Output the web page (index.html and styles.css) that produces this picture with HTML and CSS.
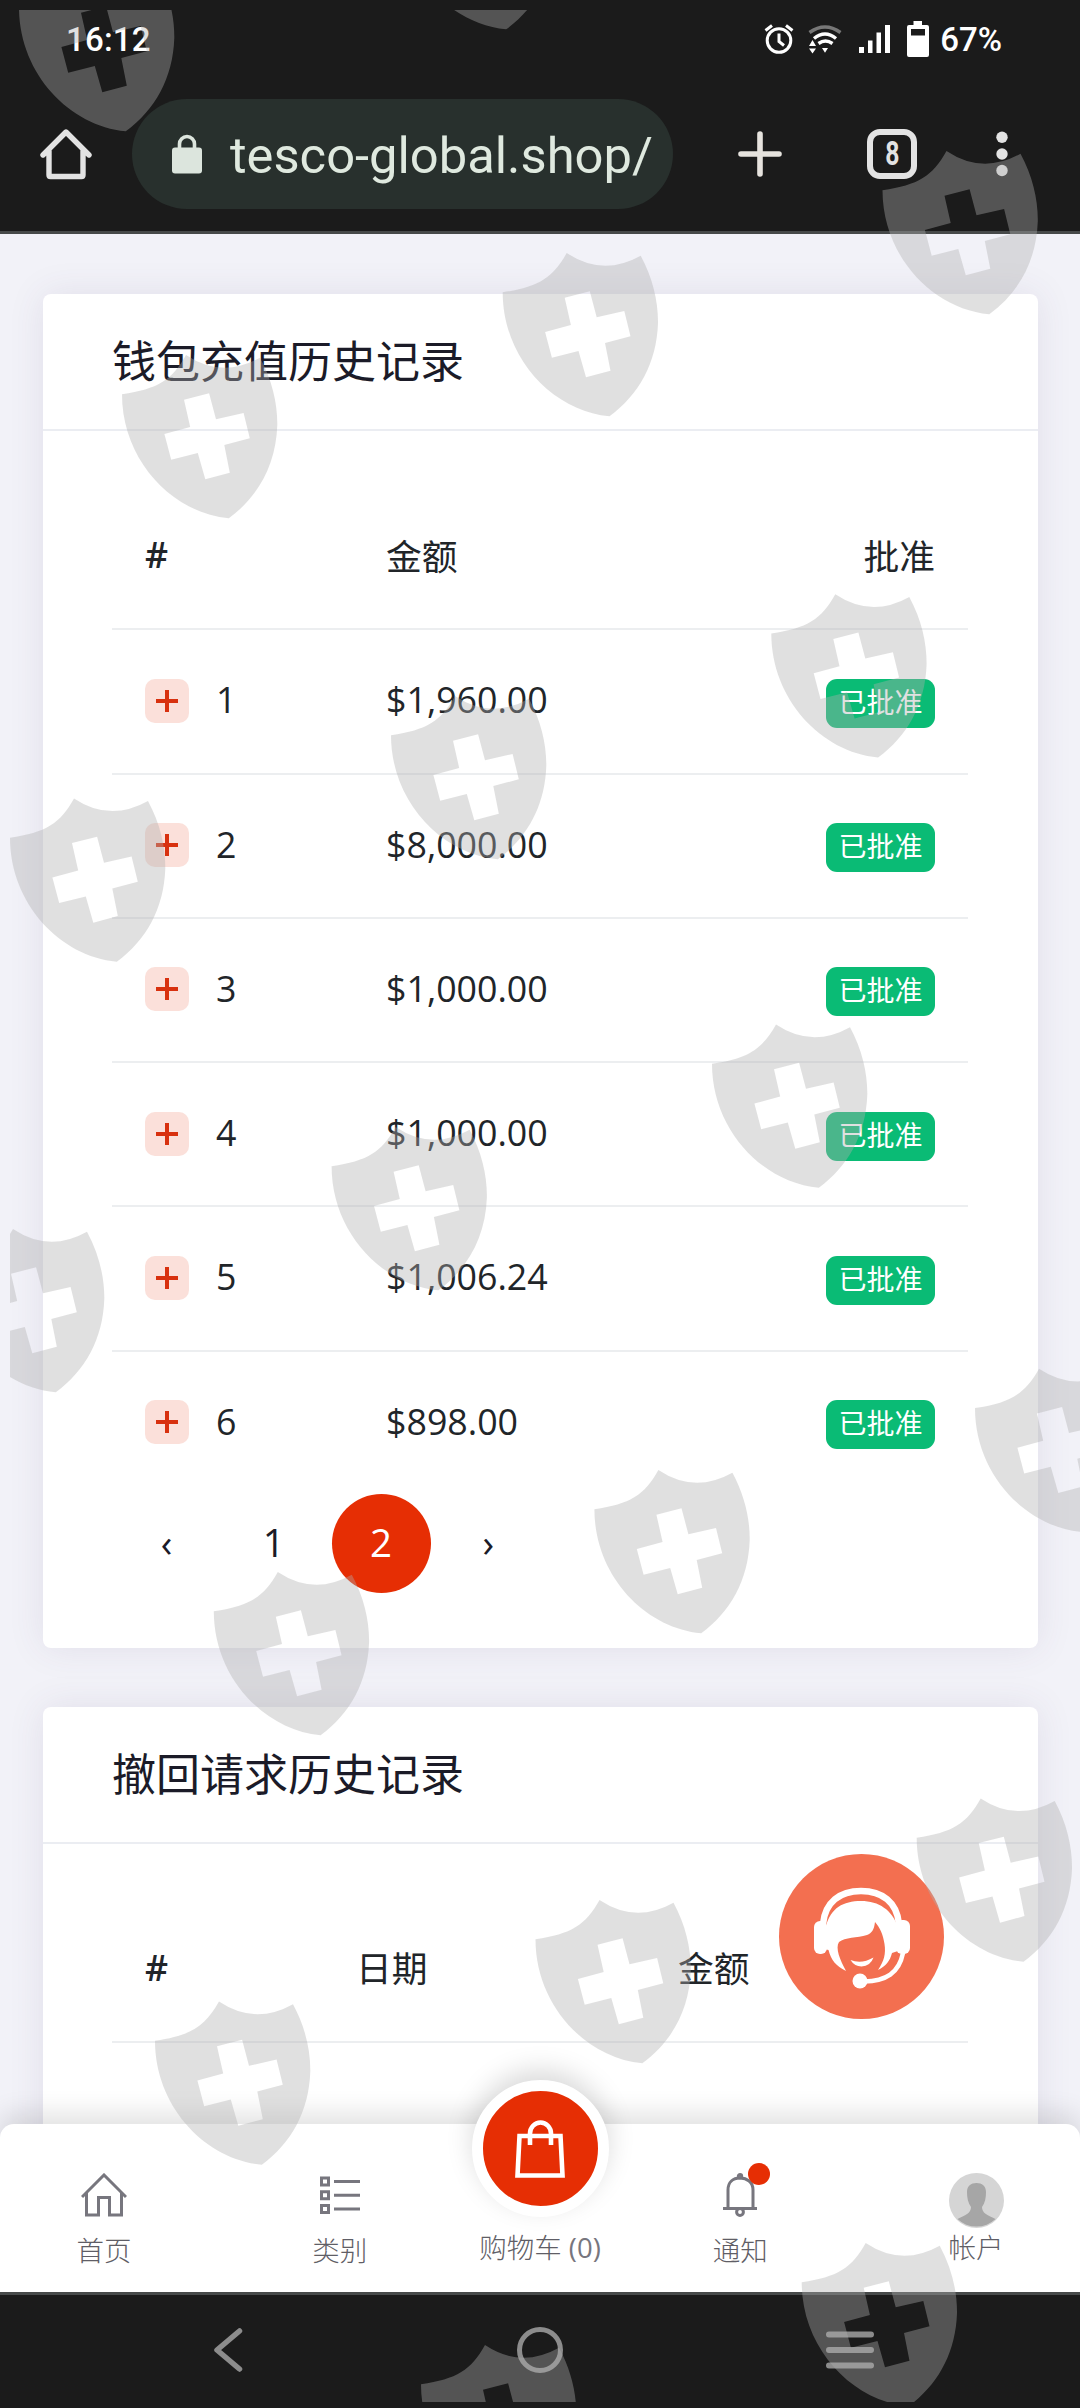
FILE: index.html
```html
<!DOCTYPE html>
<html lang="zh-CN">
<head>
    <meta charset="UTF-8" />
    <title>钱包</title>
    <link rel="stylesheet" href="styles.css">
</head>
<body>

<div class="screen">
    <!-- Status bar -->
    <div class="status-bar">
        <span class="clock">16:12</span>
        <div class="status-icons">
            <svg class="icon-alarm" width="30" height="30" viewBox="0 0 30 30" fill="none" stroke="#fff">
                <circle cx="15" cy="16.5" r="11.8" stroke-width="3"/>
                <path d="M15 9.5v8l5 4" stroke-width="3"/>
                <path d="M1.5 6.5L8 1.5M28.500 6.500L22 1.500" stroke-width="3"/>
            </svg>
            <svg class="icon-wifi" width="34" height="30" viewBox="0 0 34 30" fill="none" stroke="#fff" stroke-width="3.4">
                <path d="M1.500 8.500Q17 -2.500 32.500 8.500" stroke="#777"/>
                <path d="M6 14.500Q17 5.500 28 14.500"/>
                <path d="M10.500 19.500Q17.500 14.500 24.500 19.500"/>
                <path d="M14 24h6l-3 4.800zM1 22h7l-3.500-6zM1 24.500h7l-3.500 5z" fill="#fff" stroke="none"/>
            </svg>
            <svg class="icon-signal" width="31" height="28" viewBox="0 0 31 28" fill="#fff">
                <path d="M0 22h5v6H0zM9 15.500h4.500V28H9zM17.500 7.500H22V28h-4.500zM26 0h5v28h-5z"/>
            </svg>
            <svg class="icon-battery" width="22" height="36" viewBox="0 0 22 36" fill="#fff">
                <path fill-rule="evenodd" d="M6.500 0h8.500v4h5q2 0 2 2v28q0 2-2 2H2q-2 0-2-2V6q0-2 2-2h4.500zM4 8v6.500h14V8z"/>
            </svg>
            <span class="percent">67%</span>
        </div>
    </div>

    <!-- Browser bar -->
    <div class="browser-bar">
        <svg class="icon-home" width="52" height="52" viewBox="0 0 52 52" fill="none" stroke="#e3e3e3" stroke-width="5.400" stroke-linecap="round" stroke-linejoin="round">
            <path d="M3 27L26 4l23 23M9 23v24q0 1.500 1.500 1.500h31q1.500 0 1.500-1.500V23"/>
        </svg>
        <div class="url">
            <svg width="30" height="40" viewBox="0 0 30 40">
                <path d="M7.500 15V10a7.500 7.500 0 0 1 15 0v5" fill="none" stroke="#dce5dd" stroke-width="3.600"/>
                <rect x="0" y="13.500" width="30" height="26" rx="3" fill="#dce5dd"/>
            </svg>
            <span>tesco-global.shop/</span>
        </div>
        <svg class="icon-plus" width="44" height="46" viewBox="0 0 44 46" stroke="#e6e3de" stroke-width="5.600" stroke-linecap="round">
            <path d="M22 3v40M3 23h38"/>
        </svg>
        <div class="tab-count"><span>8</span></div>
        <svg class="icon-dots" width="12" height="46" viewBox="0 0 12 46" fill="#e3e3e3">
            <circle cx="6" cy="6.300" r="5.700"/><circle cx="6" cy="23" r="5.700"/><circle cx="6" cy="39.500" r="5.700"/>
        </svg>
    </div>

    <!-- Page -->
    <div class="page">
        <div class="card">
            <h5 class="card-header">钱包充值历史记录</h5>
            <div class="card-body">
                <div class="row row-head">
                    <b class="col-id">#</b><span class="col-amount">金额</span><span>批准</span>
                </div>
                <div class="row">
                    <span class="col-id"><i class="toggle"></i>1</span><span class="col-amount">$1,960.00</span><span class="badge">已批准</span>
                </div>
                <div class="row">
                    <span class="col-id"><i class="toggle"></i>2</span><span class="col-amount">$8,000.00</span><span class="badge">已批准</span>
                </div>
                <div class="row">
                    <span class="col-id"><i class="toggle"></i>3</span><span class="col-amount">$1,000.00</span><span class="badge">已批准</span>
                </div>
                <div class="row">
                    <span class="col-id"><i class="toggle"></i>4</span><span class="col-amount">$1,000.00</span><span class="badge">已批准</span>
                </div>
                <div class="row">
                    <span class="col-id"><i class="toggle"></i>5</span><span class="col-amount">$1,006.24</span><span class="badge">已批准</span>
                </div>
                <div class="row row-last">
                    <span class="col-id"><i class="toggle"></i>6</span><span class="col-amount">$898.00</span><span class="badge">已批准</span>
                </div>
                <div class="pagination">
                    <a>‹</a><a>1</a><a class="active">2</a><a>›</a>
                </div>
            </div>
        </div>

        <div class="card card-withdraw">
            <h5 class="card-header">撤回请求历史记录</h5>
            <div class="card-body">
                <div class="row row-head">
                    <b class="col-id2">#</b><span class="col-date">日期</span><span>金额</span>
                </div>
            </div>
        </div>

        <!-- Support button -->
        <div class="support">
            <svg width="100" height="106" viewBox="0 0 100 106" fill="none" stroke="#fff" stroke-linecap="round">
                <path d="M11 40C13 18 28 7 49 7s36 11 38 33" stroke-width="6.500"/>
                <path d="M14 42C19 24 31 17 49 17s31 9 37 26v24l-6 2C78 77 74 82 66 86 72 77 74 70 72.500 60 71 50 68 44 63 38 62 46 60 49 55 51 45 54 33 53 27 58 23 64 28 76 34 87 24 82 19 76 16.500 66l-4-1z" fill="#fff" stroke="none"/>
                <rect x="2" y="37" width="13" height="33" rx="6" fill="#fff" stroke="none"/>
                <rect x="84" y="36" width="14" height="34" rx="6" fill="#fff" stroke="none"/>
                <path d="M38.500 76q11 4.500 23-2.500-3 8.500-12 9-7 0-11-6.500z" fill="#fff" stroke="none"/>
                <path d="M91 69C87 89 74 97 52 97.500" stroke-width="4.500"/>
                <circle cx="48" cy="97" r="7.500" fill="#fff" stroke="none"/>
            </svg>
        </div>

        <!-- Bottom navigation -->
        <div class="bottom-nav">
            <a class="nav-item nav-side">
                <svg width="46" height="44" viewBox="0 0 46 44" fill="none" stroke="#77767e" stroke-width="3">
                    <path d="M1 24L23 2l22 22M5.500 20v22h12V24.500h11V42h12V20"/>
                </svg>
                <span>首页</span>
            </a>
            <a class="nav-item nav-inner">
                <svg width="40" height="44" viewBox="0 0 40 44" fill="none" stroke="#77767e" stroke-width="3">
                    <path d="M1.500 5h7v7h-7zM1.500 18.700h7v7h-7zM1.500 32.500h7v7h-7zM14 8.500h26M14 22.200h26M14 36h26"/>
                </svg>
                <span>类别</span>
            </a>
            <a class="nav-item nav-cart">
                <div class="cart">
                    <svg width="50" height="58" viewBox="0 0 50 58" fill="none" stroke="#fff" stroke-width="4.600">
                        <path d="M4.500 16h41l2 39.500h-45zM15 25V13.500a10.500 11 0 0 1 21 0V25"/>
                    </svg>
                </div>
                <span>购物车 <em>(0)</em></span>
            </a>
            <a class="nav-item nav-inner">
                <div class="bell">
                    <svg width="36" height="44" viewBox="0 0 36 44" fill="none" stroke="#77767e" stroke-width="3">
                        <path d="M1 35.500h34M6 35.500V17C6 9 11 5 18 5s13 4 13 12v18.500"/>
                        <circle cx="18" cy="39" r="3.400"/>
                        <circle cx="18" cy="3.200" r="1.700"/>
                    </svg>
                    <i class="dot"></i>
                </div>
                <span>通知</span>
            </a>
            <a class="nav-item nav-side nav-user">
                <svg width="55" height="55" viewBox="0 0 55 55">
                    <circle cx="27.500" cy="27.500" r="27.500" fill="#d5d5d5"/>
                    <path d="M18 19c0-6 4-9 9.500-9s9.500 3 9.500 9c0 6-1 11-4 15 0 6 5 8 13.500 12a27.500 27.500 0 0 1-38 0C17 42 22 40 22 34c-3-4-4-9-4-15z" fill="#a6a6a6"/>
                </svg>
                <span>帐户</span>
            </a>
        </div>
    </div>

    <!-- System bar -->
    <div class="system-bar">
        <svg width="30" height="44" viewBox="0 0 30 44" fill="none" stroke="#8c8c8c" stroke-width="5.500" stroke-linecap="round" stroke-linejoin="round">
            <path d="M26.500 3L4 22l22.500 19"/>
        </svg>
        <i class="sys-home"></i>
        <svg width="48" height="38" viewBox="0 0 48 38" stroke="#8c8c8c" stroke-width="6" stroke-linecap="round">
            <path d="M3 3.500h42M3 19h42M3 34.500h42"/>
        </svg>
    </div>

    <!-- Shield watermark -->
    <svg class="watermark" width="1080" height="2408" viewBox="0 0 1080 2408">
        <defs>
            <path id="shield" fill-rule="evenodd" d="M0 39.300C36 34 50 25 64 0Q100 24 138 2.700C150 25 155.500 48 155.300 70C154 110 136 142 106.800 163.300C50 158 0 105 0 39.300zM62 44.700L68.200 72 42.400 79 49.200 104.700 75.800 98 83.300 124.300 107.800 117.700 102.300 90 127.800 83.300 121.600 58 94 64.300 87.100 38.300z"/>
            <clipPath id="area"><rect x="10" y="10" width="1070" height="2392"/></clipPath>
        </defs>
        <g fill="#b0b0b0" fill-opacity="0.39" clip-path="url(#area)">
            <use href="#shield" x="19" y="-32"/>
            <use href="#shield" x="399.400" y="-134"/>
            <use href="#shield" x="882.500" y="151"/>
            <use href="#shield" x="502.700" y="253"/>
            <use href="#shield" x="122" y="355"/>
            <use href="#shield" x="771.300" y="594.300"/>
            <use href="#shield" x="391" y="696"/>
            <use href="#shield" x="10" y="798.400"/>
            <use href="#shield" x="712" y="1024.500"/>
            <use href="#shield" x="331.600" y="1127"/>
            <use href="#shield" x="-51" y="1229"/>
            <use href="#shield" x="975" y="1368.700"/>
            <use href="#shield" x="594.400" y="1470"/>
            <use href="#shield" x="213.800" y="1572"/>
            <use href="#shield" x="916.700" y="1798.400"/>
            <use href="#shield" x="535.500" y="1900"/>
            <use href="#shield" x="155" y="2001.500"/>
            <use href="#shield" x="801.700" y="2243"/>
            <use href="#shield" x="421" y="2345"/>
        </g>
    </svg>
</div>

</body>
</html>
```
FILE: styles.css
```css
* {
    box-sizing: border-box;
}

body {
    margin: 0;
    background: #1b1b1b;
    font-family: 'Open Sans', 'Noto Sans CJK SC', sans-serif;
    color: #212529;
}

.screen {
    position: relative;
    display: flex;
    flex-direction: column;
    width: 1080px;
    height: 2408px;
    overflow: hidden;
}

svg {
    display: block;
    flex: none;
}

/* Status bar */
.status-bar {
    display: flex;
    align-items: center;
    justify-content: space-between;
    height: 78px;
    padding: 0 78px 0 66px;
    font-family: Roboto, sans-serif;
    font-weight: 500;
    font-size: 33px;
    color: #fff;
}

.clock {
    letter-spacing: 0.2px;
}

.status-icons {
    display: flex;
    align-items: center;
}

.icon-wifi {
    margin-left: 14px;
}

.icon-signal {
    margin-left: 17px;
}

.icon-battery {
    margin-left: 17px;
}

.percent {
    margin-left: 11px;
}

/* Browser bar */
.browser-bar {
    display: flex;
    align-items: center;
    height: 156px;
    padding: 0 0 2px 40px;
    border-bottom: 3px solid #474a4a;
}

.url {
    display: flex;
    align-items: center;
    gap: 28px;
    width: 541px;
    height: 110px;
    margin-left: 40px;
    padding: 4px 0 0 40px;
    border-radius: 55px;
    background: #28302d;
    font-family: Roboto, sans-serif;
    font-size: 50.7px;
    color: #dfe9df;
    white-space: nowrap;
}

.url svg {
    margin-top: -4px;
}

.icon-plus {
    margin-left: 65px;
}

.tab-count {
    display: flex;
    align-items: center;
    justify-content: center;
    width: 50px;
    height: 50px;
    margin-left: 85px;
    border: 6px solid #e3e3e3;
    border-radius: 13px;
    font-family: Roboto, sans-serif;
    font-weight: 700;
    font-size: 33px;
    color: #e3e3e3;
}

.tab-count span {
    transform: scaleX(0.75);
}

.icon-dots {
    margin-left: 79px;
}

/* Page */
.page {
    position: relative;
    height: 2058px;
    padding: 60px 42px 0 43px;
    background: #f2f2f8;
    overflow: hidden;
}

.card {
    margin-bottom: 59px;
    border-radius: 8px;
    background: #fff;
    box-shadow: 0 0 36px rgba(82, 63, 105, 0.1);
}

.card-withdraw {
    height: 700px;
}

.card-header {
    display: flex;
    align-items: center;
    height: 137px;
    margin: 0;
    padding: 0 69px 5px;
    border-bottom: 2px solid #ebedf2;
    font-size: 44px;
    font-weight: 400;
    color: #1b1b28;
}

.card-body {
    padding: 55px 70px 55px 69px;
}

.row {
    display: flex;
    align-items: center;
    height: 144.27px;
    padding: 0 33px;
    border-bottom: 2px solid #eceef0;
    font-size: 35.75px;
}

.row-head {
    padding-bottom: 6px;
}

.row-head b {
    font-weight: 600;
}

.row-last {
    height: 142px;
    border-bottom: none;
}

.col-id {
    display: flex;
    align-items: center;
    width: 241px;
    margin-top: -4px;
}

.col-amount {
    flex: 1;
    margin-top: -4px;
}

.row-head .col-id,
.row-head .col-amount {
    margin-top: 0;
}

.col-id2 {
    width: 211px;
}

.col-date {
    width: 322px;
}

/* Expand button */
.toggle {
    width: 44px;
    height: 44px;
    margin: 3px 27px 0 0;
    border-radius: 10px;
    background:
        linear-gradient(#d8310f, #d8310f) center / 22px 4px no-repeat,
        linear-gradient(#d8310f, #d8310f) center / 4px 22px no-repeat,
        #fbe0da;
}

.badge {
    width: 109px;
    height: 49px;
    margin-top: 4px;
    border-radius: 11px;
    background: #0abb75;
    font-size: 28px;
    line-height: 47px;
    text-align: center;
    color: #fff;
}

.pagination {
    display: flex;
    gap: 8.25px;
    padding-left: 5px;
}

.pagination a {
    width: 99px;
    height: 99px;
    border-radius: 50%;
    font-size: 38.5px;
    line-height: 97px;
    text-align: center;
    color: #1b1b28;
}

.pagination .active {
    background: #e62e04;
    color: #fff;
}

/* Support button */
.support {
    position: absolute;
    left: 779px;
    top: 1620px;
    display: flex;
    align-items: center;
    justify-content: center;
    width: 165px;
    height: 165px;
    border-radius: 50%;
    background: #f36f50;
}

/* Bottom navigation */
.bottom-nav {
    position: absolute;
    left: 0;
    bottom: 0;
    display: flex;
    width: 1080px;
    height: 168px;
    border-radius: 14px 14px 0 0;
    background: #fff;
    box-shadow: 0 -10px 27px rgba(0, 0, 0, 0.12);
    font-size: 27.5px;
    font-weight: 300;
    color: #5f5e66;
}

.nav-item {
    display: flex;
    flex-direction: column;
    align-items: center;
    padding-top: 49px;
}

.nav-item span {
    margin-top: 14px;
    line-height: 40px;
    white-space: nowrap;
}

.nav-side {
    width: 208px;
}

.nav-inner {
    width: 264px;
}

.nav-cart {
    width: 137px;
    padding-top: 0;
}

.nav-cart span {
    margin-top: 11px;
}

.nav-cart em {
    font-style: normal;
    font-weight: 500;
    color: #77767e;
}

.nav-user span {
    margin-top: 0;
}

.cart {
    display: flex;
    align-items: center;
    justify-content: center;
    width: 137px;
    height: 137px;
    margin-top: -44px;
    border: 11px solid #fff;
    border-radius: 50%;
    background: #e62e04;
    box-shadow: 0 -10px 27px rgba(0, 0, 0, 0.15);
}

.bell {
    position: relative;
}

.dot {
    position: absolute;
    left: 26px;
    top: -10px;
    width: 22px;
    height: 22px;
    border-radius: 50%;
    background: #e62e04;
}

/* System bar */
.system-bar {
    display: flex;
    align-items: center;
    height: 116px;
    padding: 0 0 3px 213px;
    border-top: 3px solid #474a4a;
}

.sys-home {
    width: 46px;
    height: 46px;
    margin: 0 263px 0 274px;
    border: 5.5px solid #8c8c8c;
    border-radius: 50%;
}

.watermark {
    position: absolute;
    left: 0;
    top: 0;
    pointer-events: none;
}
```
